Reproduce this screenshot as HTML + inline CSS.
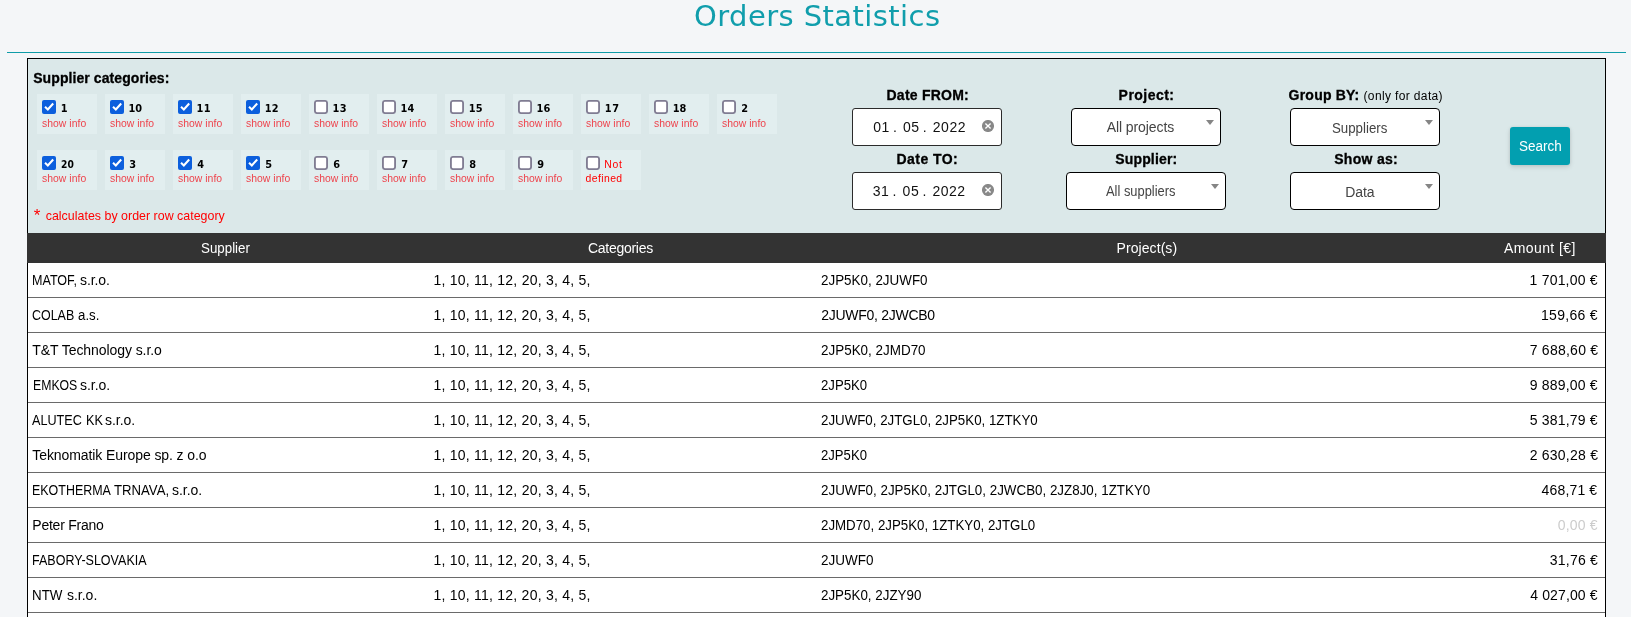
<!DOCTYPE html>
<html lang="en">
<head>
<meta charset="utf-8">
<title>Orders Statistics</title>
<style>
html,body{margin:0;padding:0;}
body{width:1631px;height:617px;overflow:hidden;background:#f4f6f8;position:relative;font-family:"Liberation Sans",sans-serif;font-size:14px;color:#000;}
.t{position:absolute;white-space:pre;display:block;transform-origin:0 0;}
.abs{position:absolute;}
.page{position:absolute;left:0;top:0;width:1631px;height:617px;overflow:hidden;will-change:transform;}
.hr{left:7px;top:52px;width:1619px;height:1px;background:#0f9ca8;}
.panel{left:27px;top:58px;width:1577px;height:175px;background:#dbe8e9;border:1px solid #000;border-bottom:0;}
.tile{position:absolute;width:60px;height:40px;background:#e2eeef;}
.cb{position:absolute;width:14px;height:14px;box-sizing:border-box;border-radius:2px;}
.cb.off{background:none;}
.cb.on{background:#0c5fdd;}
.cb svg{position:absolute;left:0;top:0;}
.inp{position:absolute;box-sizing:border-box;height:38px;background:#fff;border:1px solid #2b2b2b;border-radius:3px;}
.sel{border-color:#000;border-radius:4px;}
.arr{position:absolute;width:0;height:0;border-left:4px solid transparent;border-right:4px solid transparent;border-top:5px solid #858585;}
.clr{position:absolute;width:12px;height:12px;}
.btn{left:1510px;top:127px;width:60px;height:38px;background:#029fb0;border-radius:3px;box-shadow:0 2px 5px rgba(0,0,0,.13),0 0 3px rgba(0,0,0,.07);}
.thead{left:27px;top:233px;width:1579px;height:30px;background:#333;}
.tbody{left:27px;top:263px;width:1577px;height:354px;background:#fff;border-left:1px solid #000;border-right:1px solid #000;}
.rl{position:absolute;left:28px;width:1577px;height:1px;background:#6a6a6a;}
</style>
</head>
<body>
<div class="page">
<div class="abs hr"></div>
<div class="abs panel"></div>
<div class="tile" style="left:37px;top:94px"></div>
<div class="cb on" style="left:42px;top:100px"><svg width="14" height="14" viewBox="0 0 13 13"><path d="M2.8 6.3 L5.4 8.8 L10.4 3.2" fill="none" stroke="#fff" stroke-width="1.9" stroke-linecap="butt" stroke-linejoin="miter"/></svg></div>
<div class="tile" style="left:105px;top:94px"></div>
<div class="cb on" style="left:110px;top:100px"><svg width="14" height="14" viewBox="0 0 13 13"><path d="M2.8 6.3 L5.4 8.8 L10.4 3.2" fill="none" stroke="#fff" stroke-width="1.9" stroke-linecap="butt" stroke-linejoin="miter"/></svg></div>
<div class="tile" style="left:173px;top:94px"></div>
<div class="cb on" style="left:178px;top:100px"><svg width="14" height="14" viewBox="0 0 13 13"><path d="M2.8 6.3 L5.4 8.8 L10.4 3.2" fill="none" stroke="#fff" stroke-width="1.9" stroke-linecap="butt" stroke-linejoin="miter"/></svg></div>
<div class="tile" style="left:241px;top:94px"></div>
<div class="cb on" style="left:246px;top:100px"><svg width="14" height="14" viewBox="0 0 13 13"><path d="M2.8 6.3 L5.4 8.8 L10.4 3.2" fill="none" stroke="#fff" stroke-width="1.9" stroke-linecap="butt" stroke-linejoin="miter"/></svg></div>
<div class="tile" style="left:309px;top:94px"></div>
<div class="cb off" style="left:314px;top:100px"><svg width="14" height="14" viewBox="0 0 14 14"><rect x="0.92" y="0.92" width="12.16" height="12.16" rx="2" ry="2" fill="#fff" stroke="#807c92" stroke-width="1.85"/></svg></div>
<div class="tile" style="left:377px;top:94px"></div>
<div class="cb off" style="left:382px;top:100px"><svg width="14" height="14" viewBox="0 0 14 14"><rect x="0.92" y="0.92" width="12.16" height="12.16" rx="2" ry="2" fill="#fff" stroke="#807c92" stroke-width="1.85"/></svg></div>
<div class="tile" style="left:445px;top:94px"></div>
<div class="cb off" style="left:450px;top:100px"><svg width="14" height="14" viewBox="0 0 14 14"><rect x="0.92" y="0.92" width="12.16" height="12.16" rx="2" ry="2" fill="#fff" stroke="#807c92" stroke-width="1.85"/></svg></div>
<div class="tile" style="left:513px;top:94px"></div>
<div class="cb off" style="left:518px;top:100px"><svg width="14" height="14" viewBox="0 0 14 14"><rect x="0.92" y="0.92" width="12.16" height="12.16" rx="2" ry="2" fill="#fff" stroke="#807c92" stroke-width="1.85"/></svg></div>
<div class="tile" style="left:581px;top:94px"></div>
<div class="cb off" style="left:586px;top:100px"><svg width="14" height="14" viewBox="0 0 14 14"><rect x="0.92" y="0.92" width="12.16" height="12.16" rx="2" ry="2" fill="#fff" stroke="#807c92" stroke-width="1.85"/></svg></div>
<div class="tile" style="left:649px;top:94px"></div>
<div class="cb off" style="left:654px;top:100px"><svg width="14" height="14" viewBox="0 0 14 14"><rect x="0.92" y="0.92" width="12.16" height="12.16" rx="2" ry="2" fill="#fff" stroke="#807c92" stroke-width="1.85"/></svg></div>
<div class="tile" style="left:717px;top:94px"></div>
<div class="cb off" style="left:722px;top:100px"><svg width="14" height="14" viewBox="0 0 14 14"><rect x="0.92" y="0.92" width="12.16" height="12.16" rx="2" ry="2" fill="#fff" stroke="#807c92" stroke-width="1.85"/></svg></div>
<div class="tile" style="left:37px;top:150px"></div>
<div class="cb on" style="left:42px;top:156px"><svg width="14" height="14" viewBox="0 0 13 13"><path d="M2.8 6.3 L5.4 8.8 L10.4 3.2" fill="none" stroke="#fff" stroke-width="1.9" stroke-linecap="butt" stroke-linejoin="miter"/></svg></div>
<div class="tile" style="left:105px;top:150px"></div>
<div class="cb on" style="left:110px;top:156px"><svg width="14" height="14" viewBox="0 0 13 13"><path d="M2.8 6.3 L5.4 8.8 L10.4 3.2" fill="none" stroke="#fff" stroke-width="1.9" stroke-linecap="butt" stroke-linejoin="miter"/></svg></div>
<div class="tile" style="left:173px;top:150px"></div>
<div class="cb on" style="left:178px;top:156px"><svg width="14" height="14" viewBox="0 0 13 13"><path d="M2.8 6.3 L5.4 8.8 L10.4 3.2" fill="none" stroke="#fff" stroke-width="1.9" stroke-linecap="butt" stroke-linejoin="miter"/></svg></div>
<div class="tile" style="left:241px;top:150px"></div>
<div class="cb on" style="left:246px;top:156px"><svg width="14" height="14" viewBox="0 0 13 13"><path d="M2.8 6.3 L5.4 8.8 L10.4 3.2" fill="none" stroke="#fff" stroke-width="1.9" stroke-linecap="butt" stroke-linejoin="miter"/></svg></div>
<div class="tile" style="left:309px;top:150px"></div>
<div class="cb off" style="left:314px;top:156px"><svg width="14" height="14" viewBox="0 0 14 14"><rect x="0.92" y="0.92" width="12.16" height="12.16" rx="2" ry="2" fill="#fff" stroke="#807c92" stroke-width="1.85"/></svg></div>
<div class="tile" style="left:377px;top:150px"></div>
<div class="cb off" style="left:382px;top:156px"><svg width="14" height="14" viewBox="0 0 14 14"><rect x="0.92" y="0.92" width="12.16" height="12.16" rx="2" ry="2" fill="#fff" stroke="#807c92" stroke-width="1.85"/></svg></div>
<div class="tile" style="left:445px;top:150px"></div>
<div class="cb off" style="left:450px;top:156px"><svg width="14" height="14" viewBox="0 0 14 14"><rect x="0.92" y="0.92" width="12.16" height="12.16" rx="2" ry="2" fill="#fff" stroke="#807c92" stroke-width="1.85"/></svg></div>
<div class="tile" style="left:513px;top:150px"></div>
<div class="cb off" style="left:518px;top:156px"><svg width="14" height="14" viewBox="0 0 14 14"><rect x="0.92" y="0.92" width="12.16" height="12.16" rx="2" ry="2" fill="#fff" stroke="#807c92" stroke-width="1.85"/></svg></div>
<div class="tile" style="left:581px;top:150px"></div>
<div class="cb off" style="left:586px;top:156px"><svg width="14" height="14" viewBox="0 0 14 14"><rect x="0.92" y="0.92" width="12.16" height="12.16" rx="2" ry="2" fill="#fff" stroke="#807c92" stroke-width="1.85"/></svg></div>
<div class="inp" style="left:852px;top:108px;width:150px"></div>
<div class="inp" style="left:852px;top:172px;width:150px"></div>
<div class="inp sel" style="left:1071px;top:108px;width:150px"></div>
<div class="inp sel" style="left:1066px;top:172px;width:160px"></div>
<div class="inp sel" style="left:1290px;top:108px;width:150px"></div>
<div class="inp sel" style="left:1290px;top:172px;width:150px"></div>
<svg class="clr" style="left:982px;top:120px" viewBox="0 0 12 12"><circle cx="6" cy="6" r="6.05" fill="#888"/><path d="M3.4 3.4 L8.6 8.6 M8.6 3.4 L3.4 8.6" stroke="#fff" stroke-width="1.35" fill="none"/></svg>
<svg class="clr" style="left:982px;top:184px" viewBox="0 0 12 12"><circle cx="6" cy="6" r="6.05" fill="#888"/><path d="M3.4 3.4 L8.6 8.6 M8.6 3.4 L3.4 8.6" stroke="#fff" stroke-width="1.35" fill="none"/></svg>
<div class="arr" style="left:1206px;top:120px"></div>
<div class="arr" style="left:1211px;top:184px"></div>
<div class="arr" style="left:1425px;top:120px"></div>
<div class="arr" style="left:1425px;top:184px"></div>
<div class="abs btn"></div>
<div class="abs tbody"></div>
<div class="abs thead"></div>
<div class="rl" style="top:297px"></div>
<div class="rl" style="top:332px"></div>
<div class="rl" style="top:367px"></div>
<div class="rl" style="top:402px"></div>
<div class="rl" style="top:437px"></div>
<div class="rl" style="top:472px"></div>
<div class="rl" style="top:507px"></div>
<div class="rl" style="top:542px"></div>
<div class="rl" style="top:577px"></div>
<div class="rl" style="top:612px"></div>
<h1 class="t" style="left:693.98px;top:-3.13px;font-size:29px;line-height:38px;color:#109eac;letter-spacing:0.423px;font-family:'DejaVu Sans', sans-serif;margin:0;font-weight:normal;">Orders Statistics</h1> 
<span class="t" style="left:33.20px;top:69.15px;font-size:14px;line-height:18px;font-weight:bold;-webkit-text-stroke:0.3px #000;letter-spacing:0.083px;">Supplier categories:</span> 
<span class="t" style="left:60.64px;top:102.01px;font-size:9.8px;line-height:13px;font-weight:bold;font-family:'DejaVu Sans', sans-serif;">1</span> 
<span class="t" style="left:41.90px;top:117.40px;font-size:10.4px;line-height:14px;color:#ee434c;letter-spacing:0.062px;">show info</span> 
<span class="t" style="left:128.61px;top:102.01px;font-size:9.8px;line-height:13px;font-weight:bold;letter-spacing:-0.191px;font-family:'DejaVu Sans', sans-serif;">10</span> 
<span class="t" style="left:109.90px;top:117.40px;font-size:10.4px;line-height:14px;color:#ee434c;letter-spacing:0.041px;">show info</span> 
<span class="t" style="left:196.62px;top:102.01px;font-size:9.8px;line-height:13px;font-weight:bold;letter-spacing:0.208px;font-family:'DejaVu Sans', sans-serif;">11</span> 
<span class="t" style="left:177.90px;top:117.40px;font-size:10.4px;line-height:14px;color:#ee434c;letter-spacing:0.068px;">show info</span> 
<span class="t" style="left:264.64px;top:102.01px;font-size:9.8px;line-height:13px;font-weight:bold;letter-spacing:0.232px;font-family:'DejaVu Sans', sans-serif;">12</span> 
<span class="t" style="left:245.90px;top:117.40px;font-size:10.4px;line-height:14px;color:#ee434c;letter-spacing:0.062px;">show info</span> 
<span class="t" style="left:332.61px;top:102.01px;font-size:9.8px;line-height:13px;font-weight:bold;letter-spacing:0.246px;font-family:'DejaVu Sans', sans-serif;">13</span> 
<span class="t" style="left:313.90px;top:117.40px;font-size:10.4px;line-height:14px;color:#ee434c;letter-spacing:0.041px;">show info</span> 
<span class="t" style="left:400.62px;top:102.01px;font-size:9.8px;line-height:13px;font-weight:bold;letter-spacing:0.176px;font-family:'DejaVu Sans', sans-serif;">14</span> 
<span class="t" style="left:381.90px;top:117.40px;font-size:10.4px;line-height:14px;color:#ee434c;letter-spacing:0.068px;">show info</span> 
<span class="t" style="left:468.64px;top:102.01px;font-size:9.8px;line-height:13px;font-weight:bold;letter-spacing:0.272px;font-family:'DejaVu Sans', sans-serif;">15</span> 
<span class="t" style="left:449.90px;top:117.40px;font-size:10.4px;line-height:14px;color:#ee434c;letter-spacing:0.062px;">show info</span> 
<span class="t" style="left:536.61px;top:102.01px;font-size:9.8px;line-height:13px;font-weight:bold;letter-spacing:0.096px;font-family:'DejaVu Sans', sans-serif;">16</span> 
<span class="t" style="left:517.90px;top:117.40px;font-size:10.4px;line-height:14px;color:#ee434c;letter-spacing:0.041px;">show info</span> 
<span class="t" style="left:604.63px;top:102.01px;font-size:9.8px;line-height:13px;font-weight:bold;letter-spacing:0.685px;font-family:'DejaVu Sans', sans-serif;">17</span> 
<span class="t" style="left:585.90px;top:117.40px;font-size:10.4px;line-height:14px;color:#ee434c;letter-spacing:0.068px;">show info</span> 
<span class="t" style="left:672.64px;top:102.01px;font-size:9.8px;line-height:13px;font-weight:bold;letter-spacing:0.112px;font-family:'DejaVu Sans', sans-serif;">18</span> 
<span class="t" style="left:653.90px;top:117.40px;font-size:10.4px;line-height:14px;color:#ee434c;letter-spacing:0.062px;">show info</span> 
<span class="t" style="left:741.20px;top:102.01px;font-size:9.8px;line-height:13px;font-weight:bold;font-family:'DejaVu Sans', sans-serif;">2</span> 
<span class="t" style="left:721.90px;top:117.40px;font-size:10.4px;line-height:14px;color:#ee434c;letter-spacing:0.041px;">show info</span> 
<span class="t" style="left:61.20px;top:158.01px;font-size:9.8px;line-height:13px;font-weight:bold;transform:scaleX(0.9387);font-family:'DejaVu Sans', sans-serif;">20</span> 
<span class="t" style="left:41.90px;top:172.40px;font-size:10.4px;line-height:14px;color:#ee434c;letter-spacing:0.068px;">show info</span> 
<span class="t" style="left:129.20px;top:158.01px;font-size:9.8px;line-height:13px;font-weight:bold;font-family:'DejaVu Sans', sans-serif;">3</span> 
<span class="t" style="left:109.90px;top:172.40px;font-size:10.4px;line-height:14px;color:#ee434c;letter-spacing:0.062px;">show info</span> 
<span class="t" style="left:197.20px;top:158.01px;font-size:9.8px;line-height:13px;font-weight:bold;font-family:'DejaVu Sans', sans-serif;">4</span> 
<span class="t" style="left:177.90px;top:172.40px;font-size:10.4px;line-height:14px;color:#ee434c;letter-spacing:0.041px;">show info</span> 
<span class="t" style="left:265.20px;top:158.01px;font-size:9.8px;line-height:13px;font-weight:bold;font-family:'DejaVu Sans', sans-serif;">5</span> 
<span class="t" style="left:245.90px;top:172.40px;font-size:10.4px;line-height:14px;color:#ee434c;letter-spacing:0.068px;">show info</span> 
<span class="t" style="left:333.20px;top:158.01px;font-size:9.8px;line-height:13px;font-weight:bold;font-family:'DejaVu Sans', sans-serif;">6</span> 
<span class="t" style="left:313.90px;top:172.40px;font-size:10.4px;line-height:14px;color:#ee434c;letter-spacing:0.062px;">show info</span> 
<span class="t" style="left:401.20px;top:158.01px;font-size:9.8px;line-height:13px;font-weight:bold;font-family:'DejaVu Sans', sans-serif;">7</span> 
<span class="t" style="left:381.90px;top:172.40px;font-size:10.4px;line-height:14px;color:#ee434c;letter-spacing:0.041px;">show info</span> 
<span class="t" style="left:469.20px;top:158.01px;font-size:9.8px;line-height:13px;font-weight:bold;font-family:'DejaVu Sans', sans-serif;">8</span> 
<span class="t" style="left:449.90px;top:172.40px;font-size:10.4px;line-height:14px;color:#ee434c;letter-spacing:0.068px;">show info</span> 
<span class="t" style="left:537.20px;top:158.01px;font-size:9.8px;line-height:13px;font-weight:bold;font-family:'DejaVu Sans', sans-serif;">9</span> 
<span class="t" style="left:517.90px;top:172.40px;font-size:10.4px;line-height:14px;color:#ee434c;letter-spacing:0.062px;">show info</span> 
<span class="t" style="left:604.30px;top:157.70px;font-size:10.4px;line-height:14px;color:#f00;letter-spacing:0.734px;">Not</span> 
<span class="t" style="left:585.50px;top:171.90px;font-size:10.4px;line-height:14px;color:#f00;letter-spacing:0.420px;">defined</span> 
<span class="t" style="left:33.70px;top:205.31px;font-size:17px;line-height:22px;color:#f00;">*</span> 
<span class="t" style="left:45.70px;top:207.80px;font-size:12.4px;line-height:16px;color:#f00;letter-spacing:0.023px;">calculates by order row category</span> 
<span class="t" style="left:886.50px;top:86.15px;font-size:14px;line-height:18px;font-weight:bold;-webkit-text-stroke:0.3px #000;letter-spacing:0.241px;">Date FROM:</span> 
<span class="t" style="left:896.50px;top:150.15px;font-size:14px;line-height:18px;font-weight:bold;-webkit-text-stroke:0.3px #000;letter-spacing:0.451px;">Date TO:</span> 
<span class="t" style="left:1118.60px;top:86.15px;font-size:14px;line-height:18px;font-weight:bold;-webkit-text-stroke:0.3px #000;letter-spacing:0.464px;">Project:</span> 
<span class="t" style="left:1115.20px;top:150.15px;font-size:14px;line-height:18px;font-weight:bold;-webkit-text-stroke:0.3px #000;letter-spacing:0.173px;">Supplier:</span> 
<span class="t" style="left:1288.60px;top:86.15px;font-size:14px;line-height:18px;font-weight:bold;-webkit-text-stroke:0.3px #000;letter-spacing:0.215px;">Group BY:</span> 
<span class="t" style="left:1363.50px;top:87.84px;font-size:12px;line-height:16px;letter-spacing:0.363px;">(only for data)</span> 
<span class="t" style="left:1334.20px;top:150.15px;font-size:14px;line-height:18px;font-weight:bold;-webkit-text-stroke:0.3px #000;letter-spacing:0.296px;">Show as:</span> 
<span class="t" style="left:873.20px;top:117.95px;font-size:14px;line-height:18px;color:#111;letter-spacing:0.508px;">01 <span style="position:relative;left:-1.2px">.</span> 05 <span style="position:relative;left:-1.2px">.</span> 2022</span> 
<span class="t" style="left:872.73px;top:181.95px;font-size:14px;line-height:18px;color:#111;letter-spacing:0.521px;">31 <span style="position:relative;left:-1.2px">.</span> 05 <span style="position:relative;left:-1.2px">.</span> 2022</span> 
<span class="t" style="left:1106.80px;top:118.15px;font-size:14px;line-height:18px;color:#444;letter-spacing:-0.095px;">All projects</span> 
<span class="t" style="left:1105.80px;top:182.15px;font-size:14px;line-height:18px;color:#444;transform:scaleX(0.9197);">All suppliers</span> 
<span class="t" style="left:1332.00px;top:119.15px;font-size:14px;line-height:18px;color:#444;transform:scaleX(0.9482);">Suppliers</span> 
<span class="t" style="left:1345.30px;top:183.15px;font-size:14px;line-height:18px;color:#444;letter-spacing:-0.134px;">Data</span> 
<span class="t" style="left:1519.10px;top:136.95px;font-size:14px;line-height:18px;color:#fff;transform:scaleX(0.9631);">Search</span> 
<span class="t" style="left:200.64px;top:238.95px;font-size:14px;line-height:18px;color:#fff;transform:scaleX(0.9529);">Supplier</span> 
<span class="t" style="left:588.00px;top:238.95px;font-size:14px;line-height:18px;color:#fff;letter-spacing:-0.286px;">Categories</span> 
<span class="t" style="left:1116.60px;top:238.95px;font-size:14px;line-height:18px;color:#fff;letter-spacing:0.068px;">Project(s)</span> 
<span class="t" style="left:1504.00px;top:238.95px;font-size:14px;line-height:18px;color:#fff;letter-spacing:0.396px;">Amount [€]</span> 
<span class="t" style="left:31.96px;top:271.15px;font-size:14px;line-height:18px;transform:scaleX(0.8967);">MATOF,</span> 
<span class="t" style="left:80.00px;top:271.15px;font-size:14px;line-height:18px;letter-spacing:-0.082px;">s.r.o.</span> 
<span class="t" style="left:433.42px;top:271.15px;font-size:14px;line-height:18px;letter-spacing:0.243px;">1, 10, 11, 12, 20, 3, 4, 5,</span> 
<span class="t" style="left:821.30px;top:271.15px;font-size:14px;line-height:18px;transform:scaleX(0.9578);">2JP5K0, 2JUWF0</span> 
<span class="t" style="left:1529.61px;top:271.15px;font-size:14px;line-height:18px;letter-spacing:0.194px;">1 701,00 €</span> 
<span class="t" style="left:32.40px;top:306.15px;font-size:14px;line-height:18px;transform:scaleX(0.8900);">COLAB</span> 
<span class="t" style="left:78.10px;top:306.15px;font-size:14px;line-height:18px;transform:scaleX(0.9477);">a.s.</span> 
<span class="t" style="left:433.43px;top:306.15px;font-size:14px;line-height:18px;letter-spacing:0.241px;">1, 10, 11, 12, 20, 3, 4, 5,</span> 
<span class="t" style="left:821.30px;top:306.15px;font-size:14px;line-height:18px;letter-spacing:-0.281px;">2JUWF0, 2JWCB0</span> 
<span class="t" style="left:1541.04px;top:306.15px;font-size:14px;line-height:18px;letter-spacing:0.278px;">159,66 €</span> 
<span class="t" style="left:32.30px;top:341.15px;font-size:14px;line-height:18px;letter-spacing:-0.077px;">T&amp;T Technology s.r.o</span> 
<span class="t" style="left:433.42px;top:341.15px;font-size:14px;line-height:18px;letter-spacing:0.243px;">1, 10, 11, 12, 20, 3, 4, 5,</span> 
<span class="t" style="left:821.30px;top:341.15px;font-size:14px;line-height:18px;transform:scaleX(0.9599);">2JP5K0, 2JMD70</span> 
<span class="t" style="left:1529.70px;top:341.15px;font-size:14px;line-height:18px;letter-spacing:0.252px;">7 688,60 €</span> 
<span class="t" style="left:32.90px;top:376.15px;font-size:14px;line-height:18px;transform:scaleX(0.8755);">EMKOS</span> 
<span class="t" style="left:80.00px;top:376.15px;font-size:14px;line-height:18px;letter-spacing:-0.033px;">s.r.o.</span> 
<span class="t" style="left:433.43px;top:376.15px;font-size:14px;line-height:18px;letter-spacing:0.241px;">1, 10, 11, 12, 20, 3, 4, 5,</span> 
<span class="t" style="left:821.30px;top:376.15px;font-size:14px;line-height:18px;transform:scaleX(0.9403);">2JP5K0</span> 
<span class="t" style="left:1529.70px;top:376.15px;font-size:14px;line-height:18px;letter-spacing:0.194px;">9 889,00 €</span> 
<span class="t" style="left:31.90px;top:411.15px;font-size:14px;line-height:18px;transform:scaleX(0.9013);">ALUTEC</span> 
<span class="t" style="left:85.90px;top:411.15px;font-size:14px;line-height:18px;transform:scaleX(0.9011);">KK</span> 
<span class="t" style="left:105.10px;top:411.15px;font-size:14px;line-height:18px;letter-spacing:-0.055px;">s.r.o.</span> 
<span class="t" style="left:433.43px;top:411.15px;font-size:14px;line-height:18px;letter-spacing:0.241px;">1, 10, 11, 12, 20, 3, 4, 5,</span> 
<span class="t" style="left:821.30px;top:411.15px;font-size:14px;line-height:18px;transform:scaleX(0.9509);">2JUWF0, 2JTGL0, 2JP5K0, 1ZTKY0</span> 
<span class="t" style="left:1529.70px;top:411.15px;font-size:14px;line-height:18px;letter-spacing:0.195px;">5 381,79 €</span> 
<span class="t" style="left:32.30px;top:446.15px;font-size:14px;line-height:18px;letter-spacing:-0.090px;">Teknomatik Europe sp. z o.o</span> 
<span class="t" style="left:433.42px;top:446.15px;font-size:14px;line-height:18px;letter-spacing:0.243px;">1, 10, 11, 12, 20, 3, 4, 5,</span> 
<span class="t" style="left:821.30px;top:446.15px;font-size:14px;line-height:18px;transform:scaleX(0.9370);">2JP5K0</span> 
<span class="t" style="left:1529.70px;top:446.15px;font-size:14px;line-height:18px;letter-spacing:0.230px;">2 630,28 €</span> 
<span class="t" style="left:31.96px;top:481.15px;font-size:14px;line-height:18px;transform:scaleX(0.8895);">EKOTHERMA</span> 
<span class="t" style="left:114.10px;top:481.15px;font-size:14px;line-height:18px;transform:scaleX(0.9399);">TRNAVA,</span> 
<span class="t" style="left:172.00px;top:481.15px;font-size:14px;line-height:18px;letter-spacing:-0.022px;">s.r.o.</span> 
<span class="t" style="left:433.42px;top:481.15px;font-size:14px;line-height:18px;letter-spacing:0.243px;">1, 10, 11, 12, 20, 3, 4, 5,</span> 
<span class="t" style="left:821.30px;top:481.15px;font-size:14px;line-height:18px;transform:scaleX(0.9553);">2JUWF0, 2JP5K0, 2JTGL0, 2JWCB0, 2JZ8J0, 1ZTKY0</span> 
<span class="t" style="left:1541.60px;top:481.15px;font-size:14px;line-height:18px;letter-spacing:0.152px;">468,71 €</span> 
<span class="t" style="left:32.30px;top:516.15px;font-size:14px;line-height:18px;letter-spacing:-0.236px;">Peter Frano</span> 
<span class="t" style="left:433.44px;top:516.15px;font-size:14px;line-height:18px;letter-spacing:0.239px;">1, 10, 11, 12, 20, 3, 4, 5,</span> 
<span class="t" style="left:821.30px;top:516.15px;font-size:14px;line-height:18px;transform:scaleX(0.9494);">2JMD70, 2JP5K0, 1ZTKY0, 2JTGL0</span> 
<span class="t" style="left:1557.70px;top:516.15px;font-size:14px;line-height:18px;color:#ccc;letter-spacing:0.165px;">0,00 €</span> 
<span class="t" style="left:32.30px;top:551.15px;font-size:14px;line-height:18px;transform:scaleX(0.8940);">FABORY-SLOVAKIA</span> 
<span class="t" style="left:433.43px;top:551.15px;font-size:14px;line-height:18px;letter-spacing:0.241px;">1, 10, 11, 12, 20, 3, 4, 5,</span> 
<span class="t" style="left:821.30px;top:551.15px;font-size:14px;line-height:18px;transform:scaleX(0.9639);">2JUWF0</span> 
<span class="t" style="left:1549.80px;top:551.15px;font-size:14px;line-height:18px;letter-spacing:0.216px;">31,76 €</span> 
<span class="t" style="left:31.96px;top:586.15px;font-size:14px;line-height:18px;transform:scaleX(0.9544);">NTW</span> 
<span class="t" style="left:66.90px;top:586.15px;font-size:14px;line-height:18px;letter-spacing:0.009px;">s.r.o.</span> 
<span class="t" style="left:433.44px;top:586.15px;font-size:14px;line-height:18px;letter-spacing:0.239px;">1, 10, 11, 12, 20, 3, 4, 5,</span> 
<span class="t" style="left:821.30px;top:586.15px;font-size:14px;line-height:18px;transform:scaleX(0.9551);">2JP5K0, 2JZY90</span> 
<span class="t" style="left:1530.30px;top:586.15px;font-size:14px;line-height:18px;letter-spacing:0.114px;">4 027,00 €</span>
</div>
</body>
</html>
